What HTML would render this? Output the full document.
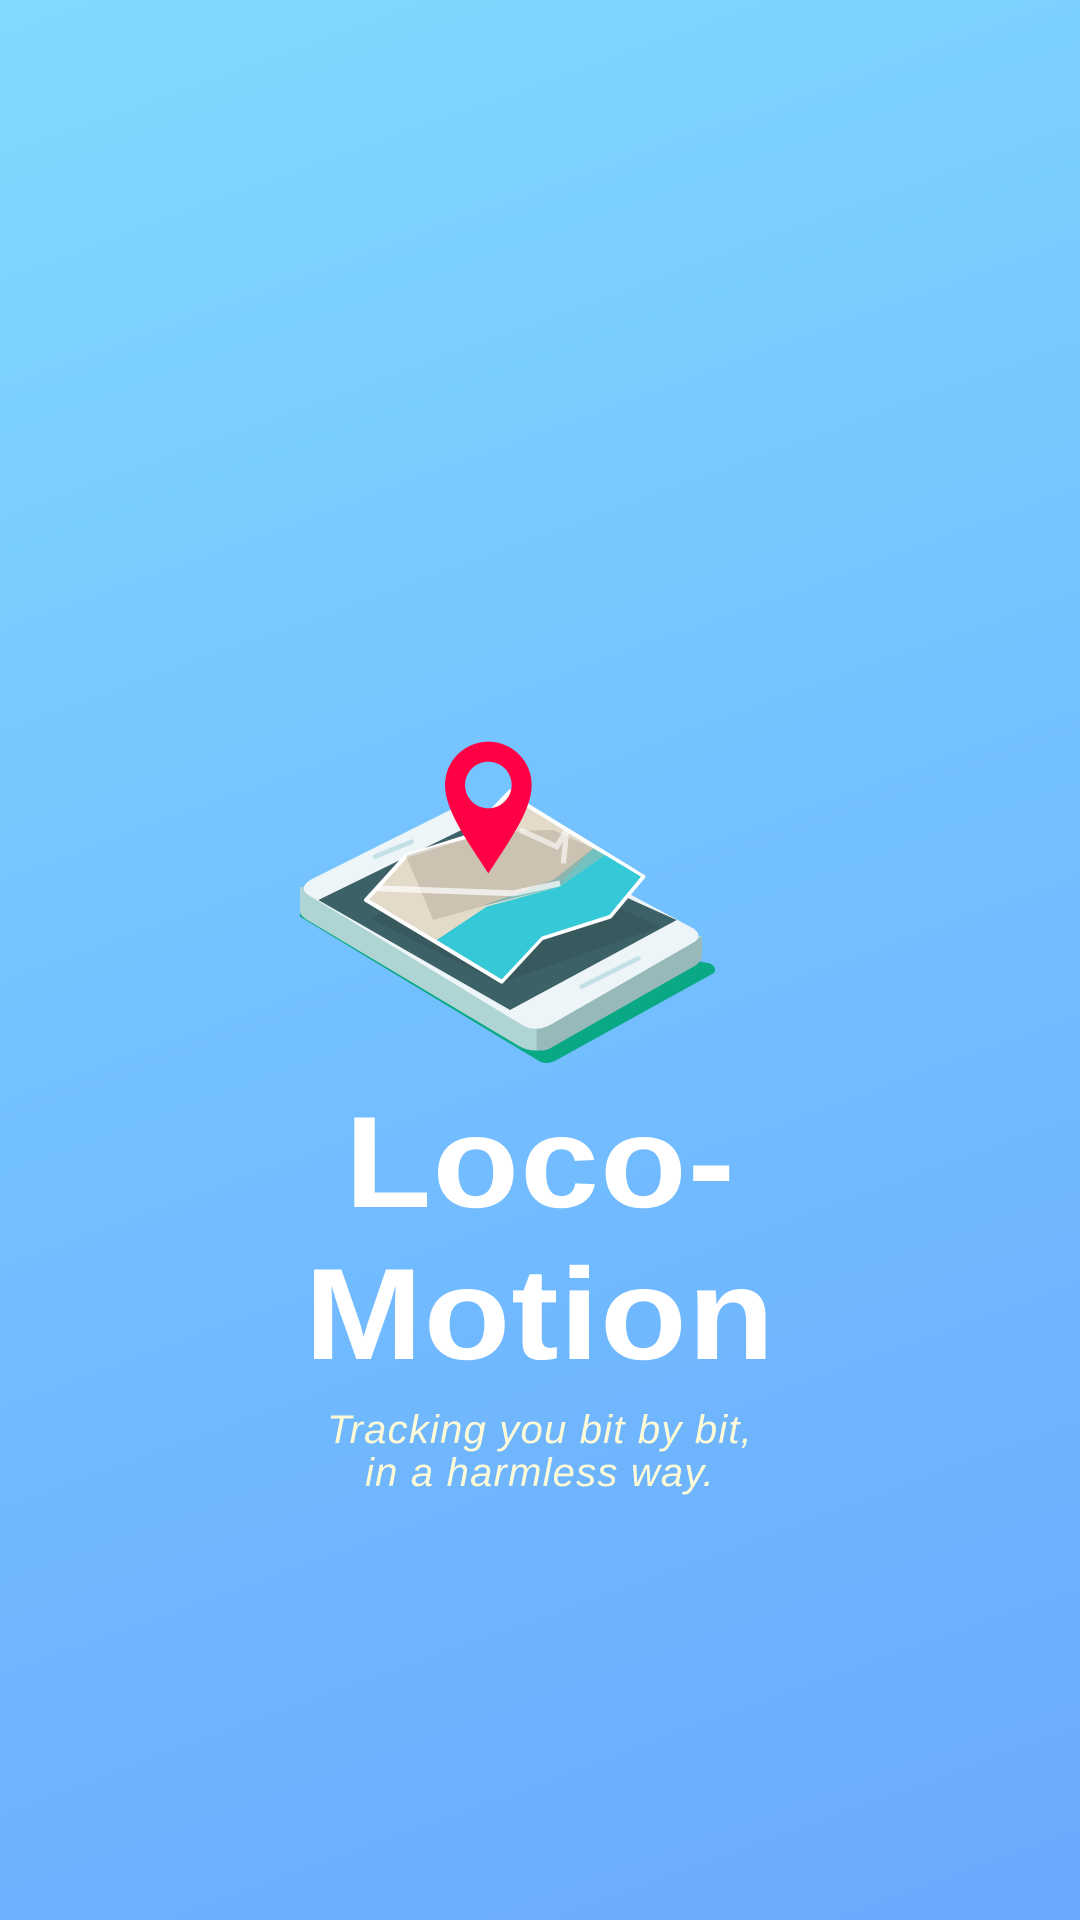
<!DOCTYPE html>
<html><head><meta charset="utf-8"><style>
html,body{margin:0;padding:0}
body{width:1080px;height:1920px;overflow:hidden;position:relative;background:linear-gradient(160deg,#82d9ff 0%,#74c2ff 45%,#6aa9fe 100%);font-family:"Liberation Sans",sans-serif}
.t{position:absolute;left:0;width:1080px;text-align:center;color:#fff;font-weight:bold;font-size:130px;line-height:1;white-space:nowrap}
.t span{display:inline-block;transform:scaleX(1.09);letter-spacing:1px}
.s{position:absolute;left:0;width:1080px;text-align:center;color:#fffbd6;font-style:italic;font-size:40px;line-height:43px;letter-spacing:1.2px}
</style></head><body>
<svg style="position:absolute;left:280px;top:720px" width="450" height="350" viewBox="0 0 1350 1050">
<path d="M60 590 L780 1025 Q800 1035 830 1020 L1300 760 Q1315 745 1290 730 L60 500 Z" fill="#0aa985"/>
<path d="M60 500 L60 575 Q62 590 90 605 L720 980 Q760 1000 800 985 L1240 740 Q1268 725 1266 700 L1266 650 Z" fill="#aed4d4"/>
<path d="M770 925 L770 990 Q790 995 810 985 L1240 740 Q1268 725 1266 700 L1266 650 Z" fill="#98b9b9"/>
<path d="M90 480 L520 265 Q545 255 570 265 L1240 625 Q1268 645 1245 665 L810 915 Q770 935 735 920 L85 525 Q55 505 90 480 Z" fill="#eef5f8"/>
<path d="M115 540 L565 320 L1190 600 L690 870 Z" fill="#3c6166"/>
<path d="M270 595 L660 790 L1140 620 L700 420 Z" fill="#36555a" opacity=".7"/>
<path d="M285 410 L395 365" stroke="#c3e0e6" stroke-width="14" stroke-linecap="round"/>
<path d="M905 800 L1075 715" stroke="#c3e0e6" stroke-width="14" stroke-linecap="round"/>
<path d="M258 540 L378 408 L560 350 L690 215 L700 230 L1090 470 L990 590 L785 655 L665 785 Z" fill="#e3dac9" stroke="#fff" stroke-width="12" stroke-linejoin="round"/>
<path d="M470 660 L620 560 L840 500 L975 405 L1083 470 L988 585 L785 650 L665 778 Z" fill="#35c9d8"/>
<path d="M600 560 L840 500 L975 405 L940 385 L820 480 Z" fill="#2ab0bc" opacity=".6"/>
<path d="M378 408 Q600 330 820 330 L940 385 L840 490 L620 555 L460 600 Z" fill="#b0a596" opacity=".45"/>
<path d="M290 505 L700 520 L840 490" stroke="#fff" stroke-width="18" fill="none" opacity=".7"/>
<path d="M720 330 L830 380 L860 330 M860 330 L850 430" stroke="#fff" stroke-width="16" fill="none" opacity=".6"/>
<path d="M625 460 C560 360 495 270 495 195 A130 130 0 0 1 755 195 C755 270 690 360 625 460 Z M625 125 A70 70 0 1 0 625.1 125 Z" fill="#ff0044" fill-rule="evenodd"/>
</svg>
<div class="t" style="top:1097px"><span>Loco-</span></div>
<div class="t" style="top:1249px"><span>Motion</span></div>
<div class="s" style="top:1409px">Tracking you bit by bit,<br>in a harmless way.</div>
</body></html>
